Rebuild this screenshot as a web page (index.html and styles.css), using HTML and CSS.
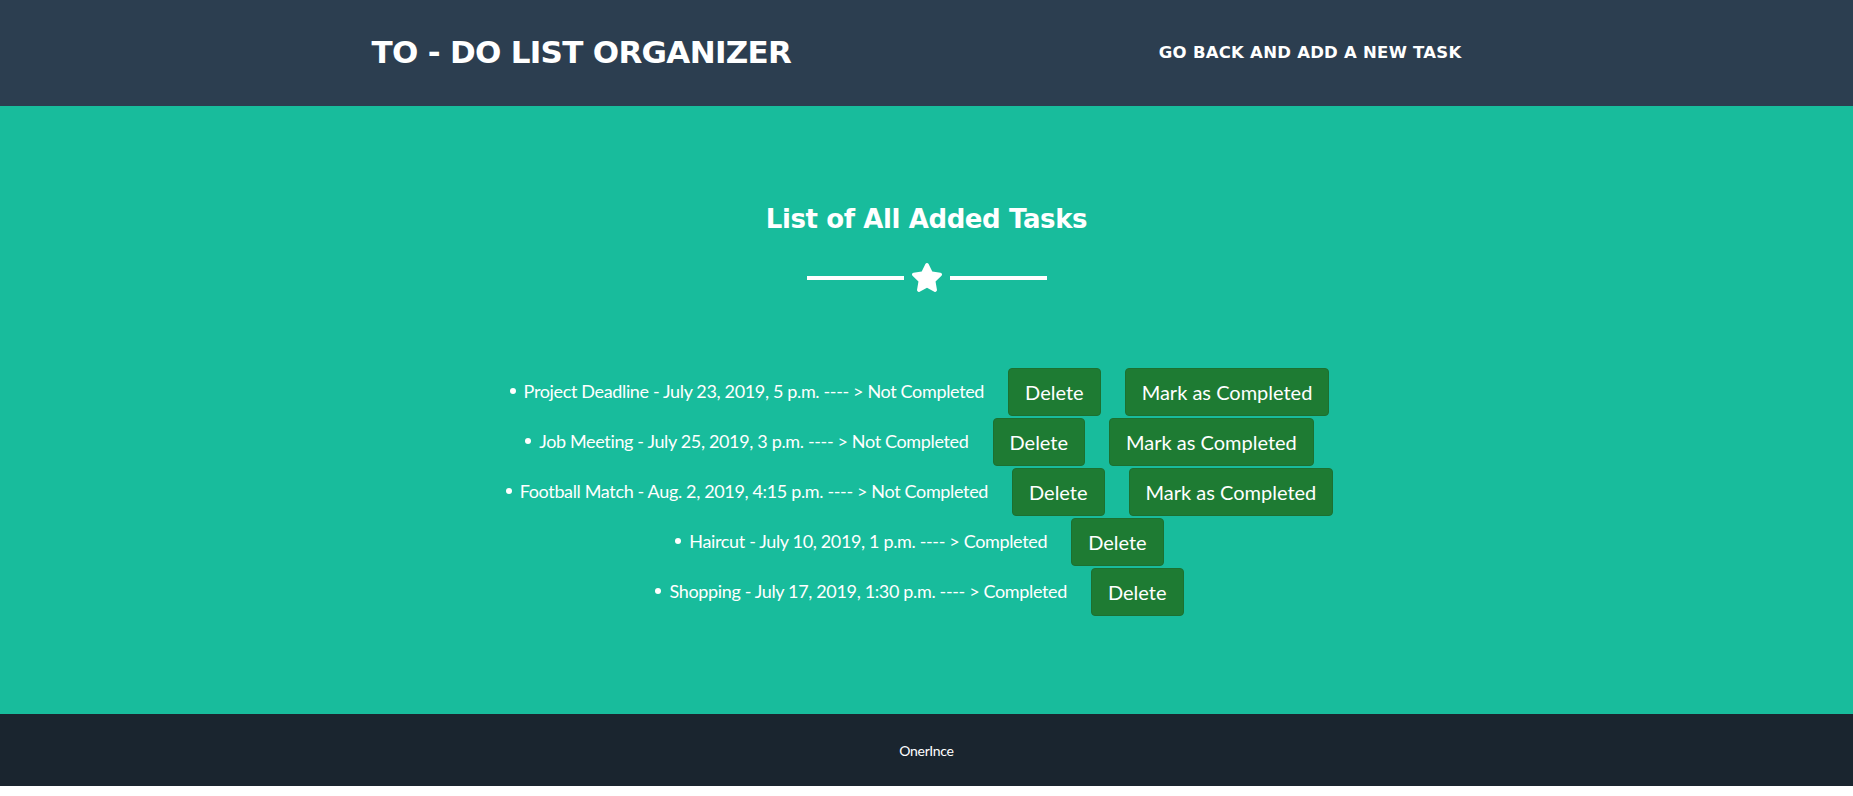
FILE: index.html
```html
<!DOCTYPE html>
<html lang="en">
<head>
<meta charset="utf-8">
<title>To - Do List Organizer</title>
<link rel="stylesheet" href="styles.css">
</head>
<body>
<header class="topbar">
  <div class="container">
    <a class="brand" href="#">To - Do List Organizer</a>
    <a class="nav-link" href="#">Go Back and Add a New Task</a>
  </div>
</header>
<section class="tasks">
  <h2 class="tasks-title">List of All Added Tasks</h2>
  <div class="divider">
    <span class="divider-line"></span>
    <svg class="divider-star" viewBox="21 0 534 512" aria-hidden="true"><path fill="#fff" d="M259.3 17.8L194 150.2 47.9 171.5c-26.2 3.8-36.7 36.1-17.7 54.6l105.7 103-25 145.5c-4.5 26.3 23.2 46 46.4 33.7L288 439.6l130.7 68.7c23.2 12.2 50.9-7.4 46.4-33.7l-25-145.5 105.7-103c19-18.5 8.5-50.8-17.7-54.6L382 150.2 316.7 17.8c-11.7-23.6-45.6-23.9-57.4 0z"/></svg>
    <span class="divider-line"></span>
  </div>
  <ul class="task-list">
    <li class="task"><span class="bullet"></span><span class="task-text">Project Deadline - July 23, 2019, 5 p.m. ---- &gt; Not Completed</span><button class="btn">Delete</button><button class="btn">Mark as Completed</button></li>
    <li class="task"><span class="bullet"></span><span class="task-text">Job Meeting - July 25, 2019, 3 p.m. ---- &gt; Not Completed</span><button class="btn">Delete</button><button class="btn">Mark as Completed</button></li>
    <li class="task"><span class="bullet"></span><span class="task-text">Football Match - Aug. 2, 2019, 4:15 p.m. ---- &gt; Not Completed</span><button class="btn">Delete</button><button class="btn">Mark as Completed</button></li>
    <li class="task"><span class="bullet"></span><span class="task-text">Haircut - July 10, 2019, 1 p.m. ---- &gt; Completed</span><button class="btn">Delete</button></li>
    <li class="task"><span class="bullet"></span><span class="task-text">Shopping - July 17, 2019, 1:30 p.m. ---- &gt; Completed</span><button class="btn">Delete</button></li>
  </ul>
</section>
<footer class="copyright">OnerInce</footer>
</body>
</html>
```
FILE: styles.css
```css
* {
  box-sizing: border-box;
}

body {
  margin: 0;
  font-family: Lato, "Liberation Sans", sans-serif;
  background: #fff;
}

.topbar {
  background: #2c3e50;
  height: 106px;
  display: flex;
  align-items: center;
}

.container {
  width: 1140px;
  margin: 0 auto;
  padding: 0 15px;
  display: flex;
  justify-content: space-between;
  align-items: center;
}

.brand {
  font-family: "DejaVu Sans", sans-serif;
  font-weight: 700;
  font-size: 31px;
  letter-spacing: -0.7px;
  line-height: 1.2;
  text-transform: uppercase;
  color: #fff;
  text-decoration: none;
}

.nav-link {
  font-family: "DejaVu Sans", sans-serif;
  font-weight: 700;
  font-size: 16.5px;
  letter-spacing: 0.25px;
  line-height: 1.2;
  text-transform: uppercase;
  color: #fff;
  text-decoration: none;
  margin-right: 20px;
}

.tasks {
  background: #18bc9c;
  padding: 96px 0;
  display: flex;
  flex-direction: column;
  align-items: center;
}

.tasks-title {
  margin: 0;
  font-family: "DejaVu Sans", sans-serif;
  font-weight: 700;
  font-size: 26px;
  letter-spacing: -0.4px;
  line-height: 34px;
  color: #fff;
}

.divider {
  margin-top: 27px;
  height: 29px;
  display: flex;
  align-items: center;
  gap: 8px;
}

.divider-line {
  width: 97px;
  height: 4px;
  background: #fff;
}

.divider-star {
  width: 30px;
  height: 29px;
  display: block;
}

.task-list {
  margin: 76px 0 0;
  padding: 0;
  list-style: none;
  width: 100%;
}

.task {
  display: flex;
  justify-content: center;
  align-items: center;
  height: 48px;
  margin-bottom: 2px;
  padding-right: 14px;
}

.bullet {
  width: 6px;
  height: 6px;
  border-radius: 50%;
  background: #fff;
  margin-right: 8px;
  margin-bottom: 2px;
}

.task-text {
  font-size: 18px;
  letter-spacing: -0.35px;
  line-height: 22px;
  color: #fff;
  margin-bottom: 3px;
}

.btn {
  font-family: Lato, "Liberation Sans", sans-serif;
  font-size: 20px;
  line-height: 30px;
  height: 48px;
  padding: 8px 16px;
  margin-left: 24px;
  color: #fff;
  background: #1e7b33;
  border: 1px solid #1c7030;
  border-radius: 4px;
  cursor: pointer;
}

.copyright {
  background: #1a252f;
  height: 72px;
  display: flex;
  align-items: center;
  justify-content: center;
  color: #fff;
  font-size: 14px;
  letter-spacing: -0.3px;
}
```
